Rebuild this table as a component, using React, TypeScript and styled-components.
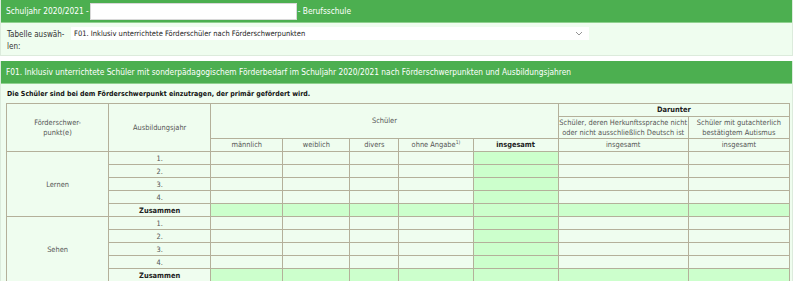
import * as React from "react";
import styled, { createGlobalStyle } from "styled-components";

const GROUPS = ["Lernen", "Sehen"];
const YEARS = ["1.", "2.", "3.", "4."];
const COL_WIDTHS = [102, 102, 72, 67, 49, 74, 85, 130, 101];

const GlobalStyle = createGlobalStyle`
  body {
    margin: 0;
    background: #fff;
    font-family: "DejaVu Sans Condensed", "DejaVu Sans", sans-serif;
  }
`;

const Chevron = () => (
  <svg width="8" height="5" viewBox="0 0 8 5">
    <path d="M1 1l3 3 3-3" fill="none" stroke="#888" strokeWidth="0.9" />
  </svg>
);

const App = () => {
  return (
    <Page>
      <GlobalStyle />
      <Panel>
        <Header>
          <span>Schuljahr 2020/2021 -</span>
          <SchoolInput />
          <span>- Berufsschule</span>
        </Header>
        <Body>
          <PickLabel>
            Tabelle auswäh-
            <br />
            len:
          </PickLabel>
          <Select>
            <span>F01. Inklusiv unterrichtete Förderschüler nach Förderschwerpunkten</span>
            <Chevron />
          </Select>
        </Body>
      </Panel>

      <Panel $gap>
        <Header $small>
          F01. Inklusiv unterrichtete Schüler mit sonderpädagogischem Förderbedarf im Schuljahr 2020/2021 nach
          Förderschwerpunkten und Ausbildungsjahren
        </Header>
        <TableBody>
          <Note>Die Schüler sind bei dem Förderschwerpunkt einzutragen, der primär gefördert wird.</Note>
          <Table>
            <colgroup>
              {COL_WIDTHS.map((w, i) => (
                <col key={i} style={{ width: w }} />
              ))}
            </colgroup>
            <thead>
              <tr>
                <Th rowSpan={3}>
                  Förderschwer-
                  <br />
                  punkt(e)
                </Th>
                <Th rowSpan={3}>Ausbildungsjahr</Th>
                <Th colSpan={5} rowSpan={2}>
                  Schüler
                </Th>
                <Th colSpan={2} $bold>
                  Darunter
                </Th>
              </tr>
              <tr>
                <Th $tall>
                  Schüler, deren Herkunftssprache nicht
                  <br />
                  oder nicht ausschließlich Deutsch ist
                </Th>
                <Th $tall>
                  Schüler mit gutachterlich
                  <br />
                  bestätigtem Autismus
                </Th>
              </tr>
              <tr>
                <Th>männlich</Th>
                <Th>weiblich</Th>
                <Th>divers</Th>
                <Th>
                  ohne Angabe<Sup>1)</Sup>
                </Th>
                <Th $bold>insgesamt</Th>
                <Th>insgesamt</Th>
                <Th>insgesamt</Th>
              </tr>
            </thead>
            <tbody>
              {GROUPS.map((group) => (
                <React.Fragment key={group}>
                  {YEARS.map((year, i) => (
                    <tr key={year}>
                      {i === 0 && <Td rowSpan={5}>{group}</Td>}
                      <Td>{year}</Td>
                      <Td />
                      <Td />
                      <Td />
                      <Td />
                      <Td $sum />
                      <Td />
                      <Td />
                    </tr>
                  ))}
                  <tr>
                    <Td $bold>Zusammen</Td>
                    {COL_WIDTHS.slice(2).map((_, i) => (
                      <Td key={i} $sum />
                    ))}
                  </tr>
                </React.Fragment>
              ))}
            </tbody>
          </Table>
        </TableBody>
      </Panel>
    </Page>
  );
};

const Page = styled.div`
  width: 793px;
`;

const Panel = styled.section<{ $gap?: boolean }>`
  margin-top: ${(p) => (p.$gap ? "5px" : "0")};
  border: 1px solid #dcebdc;
  border-top: none;
  background: #effdef;
`;

const Header = styled.div`
  display: flex;
  align-items: center;
  gap: 1px;
  height: 22px;
  padding: 0 5px;
  background: #4caf50;
  border-bottom: 1px solid #8fd18f;
  color: #fff;
  font-size: 8.3px;
  white-space: nowrap;
`;

const SchoolInput = styled.div`
  width: 205px;
  height: 15px;
  background: #fff;
  border: 1px solid #d8d8d8;
`;

const Body = styled.div`
  display: flex;
  align-items: flex-start;
  height: 32px;
  padding: 4px 6px 0;
  box-sizing: border-box;
`;

const PickLabel = styled.div`
  width: 64px;
  padding-top: 2px;
  font-size: 8px;
  line-height: 12px;
  color: #333;
`;

const Select = styled.div`
  display: flex;
  align-items: center;
  justify-content: space-between;
  width: 518px;
  height: 13px;
  padding: 0 6px 0 3px;
  box-sizing: border-box;
  background: #fff;
  font-size: 7.5px;
  color: #222;
`;

const TableBody = styled.div`
  padding: 5px 4px 0 5px;
`;

const Note = styled.div`
  margin: 0 0 3px 1px;
  font-size: 7px;
  font-weight: bold;
  line-height: 11px;
  color: #111;
`;

const Table = styled.table`
  width: 784px;
  table-layout: fixed;
  border-collapse: collapse;
  font-size: 7.4px;
  color: #555;
`;

const Th = styled.th<{ $bold?: boolean; $tall?: boolean }>`
  height: ${(p) => (p.$tall ? "21px" : "12px")};
  padding: 0;
  border: 1px solid #b4b09a;
  font-weight: ${(p) => (p.$bold ? "bold" : "normal")};
  color: ${(p) => (p.$bold ? "#222" : "#555")};
  line-height: 10px;
  text-align: center;
  vertical-align: middle;
  white-space: nowrap;
`;

const Sup = styled.sup`
  font-size: 5px;
  vertical-align: top;
  line-height: 5px;
`;

const Td = styled.td<{ $sum?: boolean; $bold?: boolean }>`
  height: 12px;
  padding: 0;
  border: 1px solid #b4b09a;
  background: ${(p) => (p.$sum ? "#ccffcc" : "transparent")};
  font-weight: ${(p) => (p.$bold ? "bold" : "normal")};
  color: ${(p) => (p.$bold ? "#222" : "#555")};
  line-height: 11px;
  text-align: center;
`;

export default App;
